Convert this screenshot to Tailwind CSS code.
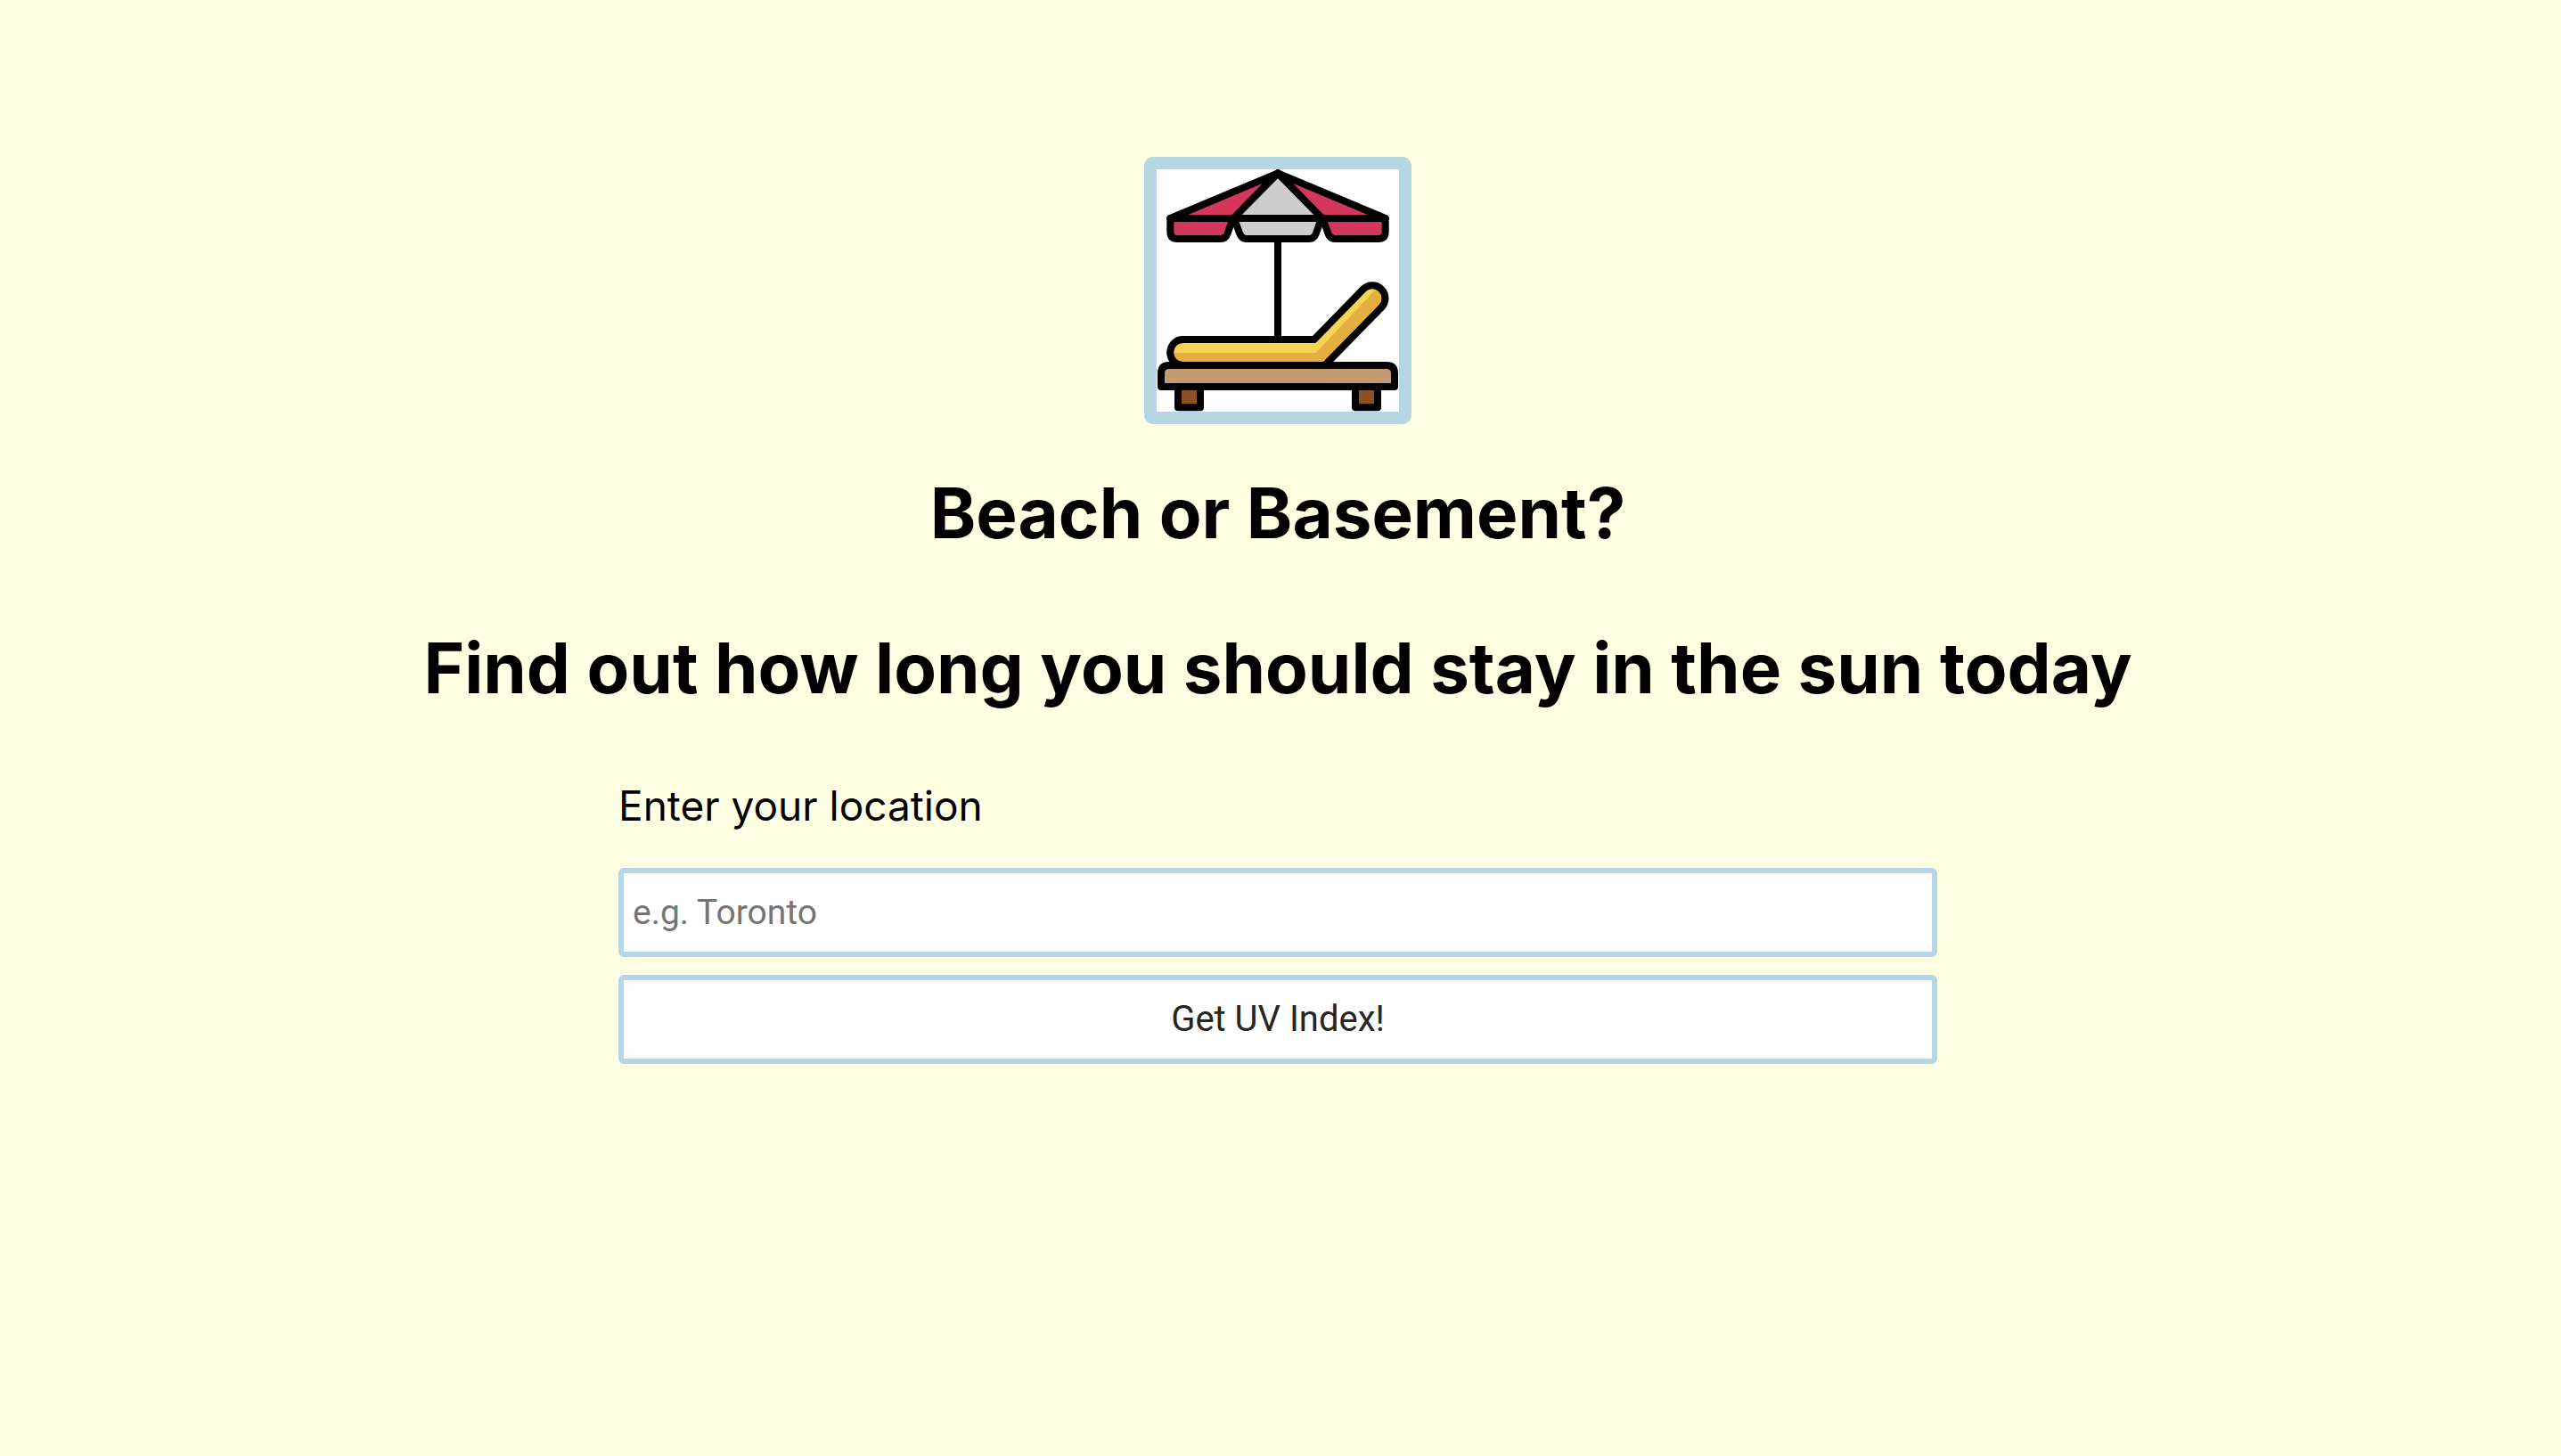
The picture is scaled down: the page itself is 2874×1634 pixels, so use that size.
<!DOCTYPE html>
<html lang="en">
<head>
<meta charset="utf-8">
<meta name="viewport" content="width=device-width, initial-scale=1">
<title>Beach or Basement?</title>
<script src="https://cdn.jsdelivr.net/npm/@tailwindcss/browser@4"></script>
</head>
<body class="min-h-screen bg-[#ffffe3] text-black font-['Inter',sans-serif]">
<main class="flex flex-col items-center pt-44 pr-[6px]">
  <svg class="box-border size-[300px] rounded-[10px] border-[14px] border-[#b5d7e3] bg-white" viewBox="84 90 816 816" role="img" aria-label="Beach umbrella over a sun lounger">
    <g stroke="#000" stroke-width="24" stroke-linejoin="round">
      <!-- pole -->
      <path d="M492 325V663" fill="none"/>
      <!-- canopy -->
      <path d="M492 103L130 255H343Z" fill="#d4375c"/>
      <path d="M492 103L854 255H641Z" fill="#d4375c"/>
      <path d="M492 103L343 255H641Z" fill="#cdcdcd"/>
      <!-- valance -->
      <path d="M130 255V300Q130 324 154 324H300Q316 324 322 308L341 255Z" fill="#d4375c"/>
      <path d="M854 255V300Q854 324 830 324H684Q668 324 662 308L643 255Z" fill="#d4375c"/>
      <path d="M345 255L363 305Q370 324 386 324H598Q614 324 621 305L639 255Z" fill="#cdcdcd"/>
      <!-- legs -->
      <path d="M156 822H231V892H156Z" fill="#8c5024"/>
      <path d="M753 822H828V892H753Z" fill="#8c5024"/>
    </g>
    <!-- cushion -->
    <path d="M173 750A43 43 0 0 1 173 663H614L779 494A43 43 0 0 1 841 555L650 750Z" fill="#e6ae3e"/>
    <path d="M130 708A43 43 0 0 1 173 663H614L779 494A43 43 0 0 1 826 490L620 708Z" fill="#f6d354"/>
    <path d="M173 750A43 43 0 0 1 173 663H614L779 494A43 43 0 0 1 841 555L650 750Z" fill="none" stroke="#000" stroke-width="24"/>
    <!-- bench -->
    <path d="M99 822V777Q99 750 126 750H858Q885 750 885 777V822Z" fill="#c49a72" stroke="#000" stroke-width="24" stroke-linejoin="round"/>
  </svg>
  <h1 class="mt-[52px] text-center text-[78px] leading-24 font-bold">Beach or Basement?</h1>
  <h2 class="mt-[78px] text-center text-[78px] leading-24 font-bold">Find out how long you should stay in the sun today</h2>
  <form class="mt-[78px] flex w-full max-w-[1480px] flex-col">
    <label for="location" class="mb-[42px] text-[46px] leading-14">Enter your location</label>
    <input id="location" type="text" placeholder="e.g. Toronto" class="h-25 rounded-md border-[6px] border-[#b5d7e3] bg-white px-[10px] font-['Roboto',sans-serif] text-[39px] placeholder:text-[#757575]">
    <button type="button" class="mt-5 h-25 rounded-md border-[6px] border-[#b5d7e3] bg-white font-['Roboto',sans-serif] text-[40px] text-[#262626]">Get UV Index!</button>
  </form>
</main>
</body>
</html>
